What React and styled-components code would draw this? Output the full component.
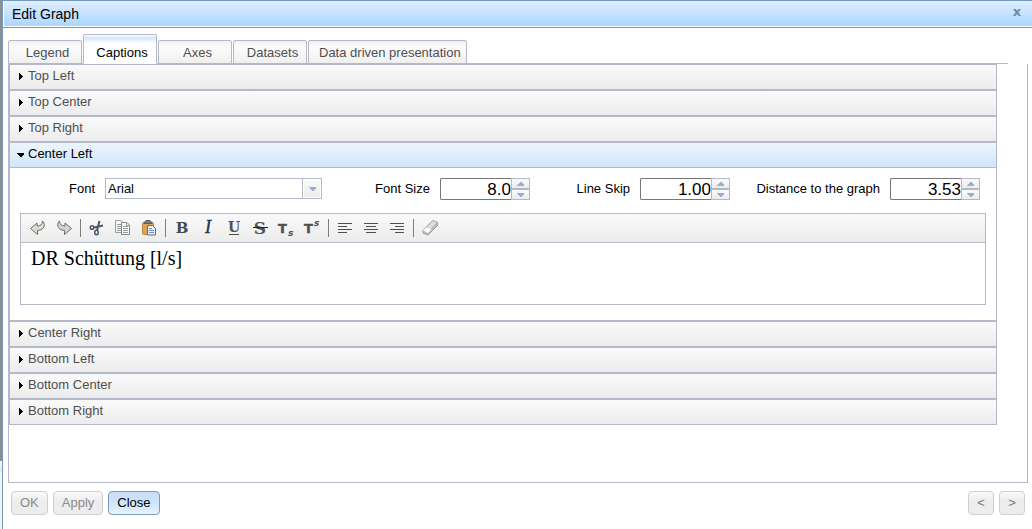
import React, { useState } from "react";
import styled, { createGlobalStyle, css } from "styled-components";

const sans = `"Liberation Sans", Arial, sans-serif`;
const line = "#b4b8c8";

const GlobalStyle = createGlobalStyle`
  *, *::before, *::after { box-sizing: border-box; }
  body { margin: 0; background: #fff; font-family: ${sans}; font-size: 13px; }
  button, input, select, textarea { font-family: inherit; margin: 0; }
`;

const Backdrop = styled.div`
  min-height: 100vh;
  display: flex;
  padding-left: 2px;
  background: linear-gradient(#8e8e8e 461px, #f4f4f4 461px 467px, #dfe9f2 467px 472px, #f4f4f4 472px);
`;

const Dialog = styled.section`
  flex: 1;
  min-width: 0;
  display: flex;
  flex-direction: column;
  background: #fff;
  border-left: 1px solid #7199bf;
  border-top: 1px solid #7199bf;
`;

const TitleBar = styled.header`
  display: flex;
  justify-content: space-between;
  height: 27px;
  padding: 0 9px;
  background: linear-gradient(#dfeeff, #abd6ff) no-repeat 1px 0 / 100% 25px;
  border-bottom: 1px solid #7199bf;
`;

const Title = styled.h1`
  margin: 0;
  font-size: 14px;
  font-weight: normal;
  line-height: 26px;
  color: #000;
`;

const CloseIcon = styled.button`
  width: 12px;
  height: 22px;
  padding: 0;
  border: 0;
  background: none;
  color: #7189a3;
  font-family: "DejaVu Sans", sans-serif;
  font-size: 13px;
  font-weight: bold;
  line-height: 22px;
`;

const Body = styled.main`
  flex: 1;
  display: flex;
  flex-direction: column;
  padding: 6px 4px 0 5px;
`;

const TabList = styled.div`
  display: flex;
  align-items: flex-end;
  gap: 1px;
  height: 30px;
  margin-right: 20px;
  box-shadow: inset 0 -1px ${line};
`;

const Tab = styled.button`
  min-width: 74px;
  height: 24px;
  padding: 1px 5px 0 10px;
  border: 1px solid ${line};
  border-radius: 2px 2px 0 0;
  background: linear-gradient(#f0f0f0, #fcfcfc 6px, #efefef);
  color: #4f4f4f;
  font-size: 13px;
  white-space: nowrap;
  ${(p) =>
    p["aria-selected"] &&
    css`
      height: 30px;
      padding: 7px 3px 0 7px;
      border-bottom-color: #fff;
      background: linear-gradient(#fff, #d0e6fa 3px, #fff 8px);
      color: #000;
    `}
`;

const Panel = styled.div`
  flex: 1;
  padding-right: 30px;
  border: solid ${line};
  border-width: 0 1px 1px;
`;

const AccordionItem = styled.section`
  border: 1px solid ${line};
`;

const AccordionHeader = styled.button`
  display: flex;
  align-items: center;
  gap: 4px;
  width: 100%;
  height: 24px;
  padding: 0 7px 4px;
  border: 0;
  background: linear-gradient(#fafafa, #ececec);
  color: #4f4f4f;
  font-size: 13px;
  text-align: left;
  svg { margin-top: 1px; }
  ${(p) =>
    p["aria-expanded"] &&
    css`
      background: linear-gradient(#edf5fe, #d0e6fa);
      color: #000;
    `}
`;

const AccordionContent = styled.div`
  padding: 10px 10px 15px;
  border-top: 1px solid ${line};
`;

const FormRow = styled.div`
  display: grid;
  grid-template-columns: 302fr 208fr 200fr 250fr;
  padding-right: 6px;
  margin-bottom: 13px;
`;

const Field = styled.div`
  display: flex;
  justify-content: flex-end;
  align-items: flex-start;
  gap: 10px;
  height: 22px;
`;

const Label = styled.label`
  line-height: 21px;
  color: #000;
  white-space: nowrap;
`;

const SelectBox = styled.div`
  display: grid;
  width: 217px;
  height: 21px;
  & > * { grid-area: 1 / 1; }
`;

const Select = styled.select`
  appearance: none;
  padding: 0 20px 0 2px;
  border: 1px solid ${line};
  border-radius: 0;
  background: #fff;
  color: #000;
  font-size: 13px;
`;

const SelectArrow = styled.span`
  justify-self: end;
  display: grid;
  place-items: center;
  width: 20px;
  border: 1px solid ${line};
  background: linear-gradient(#fafafa, #ececec);
  box-shadow: inset 0 0 0 1px #fff;
  pointer-events: none;
`;

const SpinBox = styled.div`
  display: flex;
  width: 90px;
  height: 22px;
`;

const SpinInput = styled.input`
  flex: 1;
  min-width: 0;
  padding: 2px 0 0;
  border: 1px solid #767676;
  border-right: 0;
  border-radius: 2px 0 0 2px;
  background: #fff;
  color: #000;
  font-size: 17px;
  text-align: right;
`;

const SpinButtons = styled.div`
  display: grid;
  grid-template-rows: 11px 11px;
  width: 19px;
`;

const SpinButton = styled.button`
  display: grid;
  place-items: center;
  padding: 0;
  border: 1px solid ${line};
  background: linear-gradient(#fafafa, #ececec);
`;

const Editor = styled.div`
  border: 1px solid ${line};
`;

const Toolbar = styled.div`
  display: flex;
  align-items: center;
  height: 29px;
  padding-left: 4px;
  border-bottom: 1px solid ${line};
  background: linear-gradient(#fafafa, #ececec);
`;

const ToolButton = styled.button`
  width: 26px;
  height: 26px;
  padding: 4px;
  border: 0;
  background: none;
  svg { display: block; overflow: visible; }
`;

const ToolSeparator = styled.span`
  width: 1px;
  height: 18px;
  margin: 0 3px;
  background: #7d7d7d;
`;

const EditorText = styled.textarea`
  display: block;
  width: 100%;
  height: 61px;
  padding: 4px 10px;
  border: 0;
  outline: 0;
  resize: none;
  background: #fff;
  color: #000;
  font-family: "Liberation Serif", "Times New Roman", serif;
  font-size: 20px;
  line-height: 22px;
`;

const Footer = styled.footer`
  display: flex;
  justify-content: space-between;
  padding: 8px 7px 14px 8px;
`;

const ButtonGroup = styled.div`
  display: flex;
  gap: 5px;
`;

const ActionButton = styled.button`
  min-width: 26px;
  height: 24px;
  padding: 0 8px 1px;
  border: 1px solid #cfcfcf;
  border-radius: 4px;
  background: linear-gradient(#fafafa, #ededed 40%);
  color: #8a8a8a;
  font-size: 13px;
  ${(p) =>
    p.$primary &&
    css`
      border-color: #759dc0;
      background: linear-gradient(#c4dcf6, #cfe5fa 50%, #e8f3fe);
      color: #000;
    `}
`;

const PageButton = styled(ActionButton)`
  padding: 0 0 1px;
  color: #777;
`;

const Disclosure = ({ open }) => (
  <svg width="7" height="8" viewBox="0 0 7 8" shapeRendering="crispEdges" aria-hidden="true">
    <path d={open ? "M0 3h7v1L4 7H3L0 4z" : "M2 1h1v1h1v1h1v1h1v1h-1v1h-1v1h-1v1h-1z"} fill="#000" />
  </svg>
);

const Triangle = ({ up }) => (
  <svg width="7" height="4" viewBox="0 0 7 4" shapeRendering="crispEdges" aria-hidden="true">
    <path d={up ? "M0 4h7v-1L4 0H3L0 3z" : "M0 0h7v1L4 4H3L0 1z"} fill="#98b0d4" />
  </svg>
);

const Glyph = ({ children }) => (
  <svg width="18" height="18" viewBox="0 0 18 18" aria-hidden="true">
    {children}
  </svg>
);

const SerifLetter = ({ children, ...rest }) => (
  <text x="9" y="14" textAnchor="middle" fontFamily="DejaVu Serif" fontSize="15" fontWeight="bold" fill="#4f4f4f" {...rest}>
    {children}
  </text>
);

const ScriptGlyph = ({ y }) => (
  <Glyph>
    <text x="1" y="14" fontFamily="DejaVu Sans" fontSize="13" fontWeight="bold" fill="#4f4f4f" stroke="#4f4f4f" strokeWidth="0.4">T</text>
    <text x="11" y={y} fontFamily="DejaVu Sans" fontSize="9" fontWeight="bold" fontStyle="italic" fill="#4f4f4f">s</text>
  </Glyph>
);

const Lines = ({ rows }) => (
  <Glyph>
    {rows.map(([x, w], i) => (
      <rect key={i} x={x} y={4 + i * 3} width={w} height="1" fill="#4f4f4f" />
    ))}
  </Glyph>
);

const curve = "M1.5 9.5L8 4V7C11.5 7 13.500 5.500 13.500 2C16.500 4 16.500 11 8.500 11.500V15.500Z";

const toolGroups = [
  [
    ["Undo", <Glyph><path d={curve} fill="#d9ddd6" stroke="#6c716c" strokeLinejoin="round" /></Glyph>],
    ["Redo", <Glyph><path d={curve} transform="matrix(-1 0 0 1 18 0)" fill="#d2d8d0" stroke="#6c716c" strokeLinejoin="round" /></Glyph>],
  ],
  [
    ["Cut", (
      <Glyph>
        <g fill="none" stroke="#4c5664" strokeWidth="1.5">
          <circle cx="4" cy="8.500" r="1.800" />
          <ellipse cx="8.500" cy="13.500" rx="1.800" ry="2.200" />
          <path d="M6 8.500L15 6.500M9 11.500L11.500 2" strokeWidth="2" />
        </g>
      </Glyph>
    )],
    ["Copy", (
      <Glyph>
        <path d="M1.500 1.500H7l2.500 2.500v9.500h-8z" fill="#f5f7f6" stroke="#9aa09c" />
        <path d="M3 5.500h4M3 7.500h4M3 9.500h4M3 11.500h4" stroke="#9aa09c" />
        <path d="M7.500 3.500H13l2.500 2.500v9.500h-8z" fill="#f5f7f6" stroke="#848b87" />
        <path d="M12.500 3.500v3h3M9 7.500h5M9 9.500h5M9 11.500h5M9 13.500h5" fill="none" stroke="#9aa09c" />
      </Glyph>
    )],
    ["Paste", (
      <Glyph>
        <rect x="2.500" y="3.500" width="11" height="12" rx="1" fill="#dca656" stroke="#b98843" />
        <path d="M4 4.500h8V3h-2V1.500H6V3H4z" fill="#75808c" stroke="#56616d" />
        <path d="M7.500 6.500h5l3 3v6.500h-8z" fill="#e6eef8" stroke="#53709a" />
        <path d="M9 9.500h3M9 11.500h5M9 13.500h5" stroke="#7192bd" />
      </Glyph>
    )],
  ],
  [
    ["Bold", <Glyph><SerifLetter fill="#414b58">B</SerifLetter></Glyph>],
    ["Italic", <Glyph><SerifLetter fontFamily="Liberation Serif" fontSize="18" fontStyle="italic" fontWeight="normal" fill="#26364d" stroke="#26364d" strokeWidth="0.4">I</SerifLetter></Glyph>],
    ["Underline", <Glyph><SerifLetter y="13" fontSize="14">U</SerifLetter><path d="M4 15.500h10" stroke="#4f4f4f" /></Glyph>],
    ["Strikethrough", <Glyph><SerifLetter y="15" fontSize="17">S</SerifLetter><path d="M2 8.500h15" stroke="#222" /></Glyph>],
    ["Subscript", <ScriptGlyph y={17} />],
    ["Superscript", <ScriptGlyph y={7} />],
  ],
  [
    ["Align left", <Lines rows={[[2, 14], [2, 9], [2, 14], [2, 9]]} />],
    ["Align center", <Lines rows={[[2, 14], [4, 10], [2, 14], [4, 10]]} />],
    ["Align right", <Lines rows={[[2, 14], [7, 9], [2, 14], [7, 9]]} />],
  ],
  [
    ["Remove format", (
      <Glyph>
        <path d="M12 1.500L16.500 3.500V6.500L7 16L2 14V11.500z" fill="#bdbdbd" stroke="#999" />
        <path d="M12 1.500L16.500 3.500L7 13.500L2 11.500z" fill="#ddd" stroke="#b2b2b2" />
        <path d="M5.500 8.500L10.500 10.500L7 14L2 11.500z" fill="#fff" />
      </Glyph>
    )],
  ],
];

const tabs = ["Legend", "Captions", "Axes", "Datasets", "Data driven presentation"];

const positions = [
  "Top Left", "Top Center", "Top Right", "Center Left",
  "Center Right", "Bottom Left", "Bottom Center", "Bottom Right",
];

function Spinner({ id, label, initial, digits }) {
  const [value, setValue] = useState(initial);
  const step = (d) => setValue((v) => (Number(v) + d).toFixed(digits));
  return (
    <Field>
      <Label htmlFor={id}>{label}</Label>
      <SpinBox>
        <SpinInput id={id} inputMode="decimal" value={value} onChange={(e) => setValue(e.target.value)} />
        <SpinButtons>
          <SpinButton type="button" aria-label={`Increase ${label}`} onClick={() => step(1)}><Triangle up /></SpinButton>
          <SpinButton type="button" aria-label={`Decrease ${label}`} onClick={() => step(-1)}><Triangle /></SpinButton>
        </SpinButtons>
      </SpinBox>
    </Field>
  );
}

function CaptionForm() {
  return (
    <AccordionContent>
      <FormRow>
        <Field>
          <Label htmlFor="font">Font</Label>
          <SelectBox>
            <Select id="font" defaultValue="Arial">
              <option>Arial</option>
            </Select>
            <SelectArrow><Triangle /></SelectArrow>
          </SelectBox>
        </Field>
        <Spinner id="size" label="Font Size" initial="8.0" digits={1} />
        <Spinner id="skip" label="Line Skip" initial="1.00" digits={2} />
        <Spinner id="distance" label="Distance to the graph" initial="3.53" digits={2} />
      </FormRow>
      <Editor>
        <Toolbar role="toolbar" aria-label="Formatting">
          {toolGroups.map((group, i) => (
            <React.Fragment key={i}>
              {i > 0 && <ToolSeparator />}
              {group.map(([name, icon]) => (
                <ToolButton key={name} type="button" aria-label={name}>{icon}</ToolButton>
              ))}
            </React.Fragment>
          ))}
        </Toolbar>
        <EditorText aria-label="Caption text" spellCheck={false} defaultValue="DR Schüttung [l/s]" />
      </Editor>
    </AccordionContent>
  );
}

export default function App() {
  const [tab, setTab] = useState("Captions");
  const [open, setOpen] = useState("Center Left");
  return (
    <Backdrop>
      <GlobalStyle />
      <Dialog role="dialog" aria-labelledby="dialog-title">
        <TitleBar>
          <Title id="dialog-title">Edit Graph</Title>
          <CloseIcon type="button" aria-label="Close dialog">x</CloseIcon>
        </TitleBar>
        <Body>
          <TabList role="tablist">
            {tabs.map((t) => (
              <Tab key={t} type="button" role="tab" aria-selected={t === tab} onClick={() => setTab(t)}>{t}</Tab>
            ))}
          </TabList>
          <Panel role="tabpanel">
            {positions.map((p) => (
              <AccordionItem key={p}>
                <AccordionHeader type="button" aria-expanded={p === open} onClick={() => setOpen(p)}>
                  <Disclosure open={p === open} />
                  {p}
                </AccordionHeader>
                {p === open && <CaptionForm />}
              </AccordionItem>
            ))}
          </Panel>
        </Body>
        <Footer>
          <ButtonGroup>
            <ActionButton type="button" disabled>OK</ActionButton>
            <ActionButton type="button" disabled>Apply</ActionButton>
            <ActionButton type="button" $primary>Close</ActionButton>
          </ButtonGroup>
          <ButtonGroup>
            <PageButton type="button" disabled aria-label="Previous">&lt;</PageButton>
            <PageButton type="button" disabled aria-label="Next">&gt;</PageButton>
          </ButtonGroup>
        </Footer>
      </Dialog>
    </Backdrop>
  );
}
